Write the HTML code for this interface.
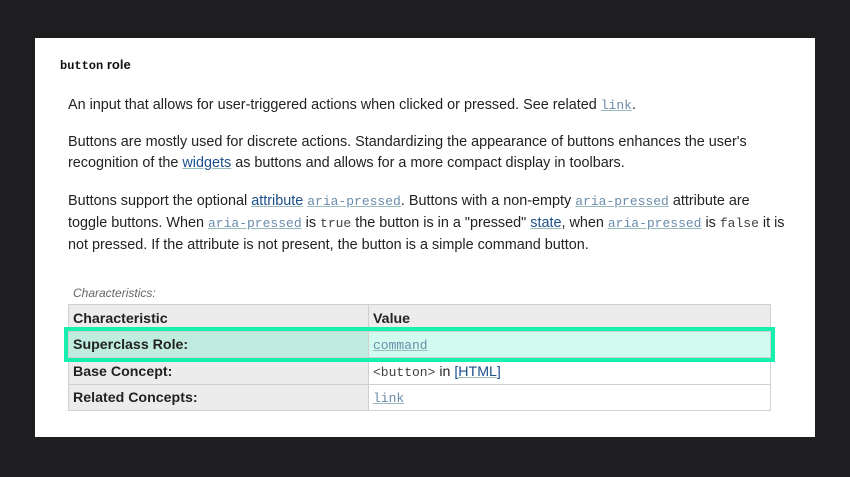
<!DOCTYPE html>
<html><head><meta charset="utf-8"><style>
html,body{margin:0;padding:0;width:850px;height:477px;background:#1e1e21;overflow:hidden}
.panel{position:absolute;left:35px;top:38px;width:780px;height:399px;background:#fff}
body{font-family:"Liberation Sans",Arial,sans-serif;color:#222}
.t{position:absolute;left:25px;top:19px;font-size:13px;font-weight:bold;color:#111}
.t code{font-family:"Liberation Mono",monospace;font-size:12px;color:#111}
p{position:absolute;left:33px;margin:0;font-size:14.4px;line-height:21px;width:760px;color:#222;white-space:nowrap}
a{color:#1a4f8a;text-decoration:underline;text-decoration-color:#9bb}
code{font-family:"Liberation Mono",monospace;font-size:13px;color:#444;line-height:0}
a code{color:#6b8cab}
.cap{position:absolute;left:38px;top:248px;font-size:12px;font-style:italic;color:#666}
table{position:absolute;left:33px;top:266px;width:703px;border-collapse:collapse;font-size:14.2px;line-height:16px}
td,th{border:1px solid #d0d0d0;height:23.5px;padding:2px 4px 0;text-align:left;vertical-align:middle}
th{background:#ececec;font-weight:bold}
td.k{background:#ececec;font-weight:bold;width:291px}
tr.hl td{background:#d0fbee}
tr.hl td.k{background:#c0ecdf}
.box{position:absolute;left:29px;top:289px;width:703px;height:27px;border:4px solid #16efae}
</style></head><body>
<div class="panel">
<div class="t"><code>button</code> role</div>
<p style="top:57px">An input that allows for user-triggered actions when clicked or pressed. See related <a><code>link</code></a>.</p>
<p style="top:94px;line-height:21px">Buttons are mostly used for discrete actions. Standardizing the appearance of buttons enhances the user's<br>recognition of the <a>widgets</a> as buttons and allows for a more compact display in toolbars.</p>
<p style="top:152px;line-height:22px">Buttons support the optional <a>attribute</a> <a><code>aria-pressed</code></a>. Buttons with a non-empty <a><code>aria-pressed</code></a> attribute are<br>toggle buttons. When <a><code>aria-pressed</code></a> is <code>true</code> the button is in a "pressed" <a>state</a>, when <a><code>aria-pressed</code></a> is <code>false</code> it is<br>not pressed. If the attribute is not present, the button is a simple command button.</p>
<div class="cap">Characteristics:</div>
<table>
<tr><th>Characteristic</th><th>Value</th></tr>
<tr class="hl"><td class="k">Superclass Role:</td><td><a><code>command</code></a></td></tr>
<tr><td class="k">Base Concept:</td><td><code>&lt;button&gt;</code> in <a>[HTML]</a></td></tr>
<tr><td class="k">Related Concepts:</td><td><a><code>link</code></a></td></tr>
</table>
<div class="box"></div>
</div>
</body></html>
